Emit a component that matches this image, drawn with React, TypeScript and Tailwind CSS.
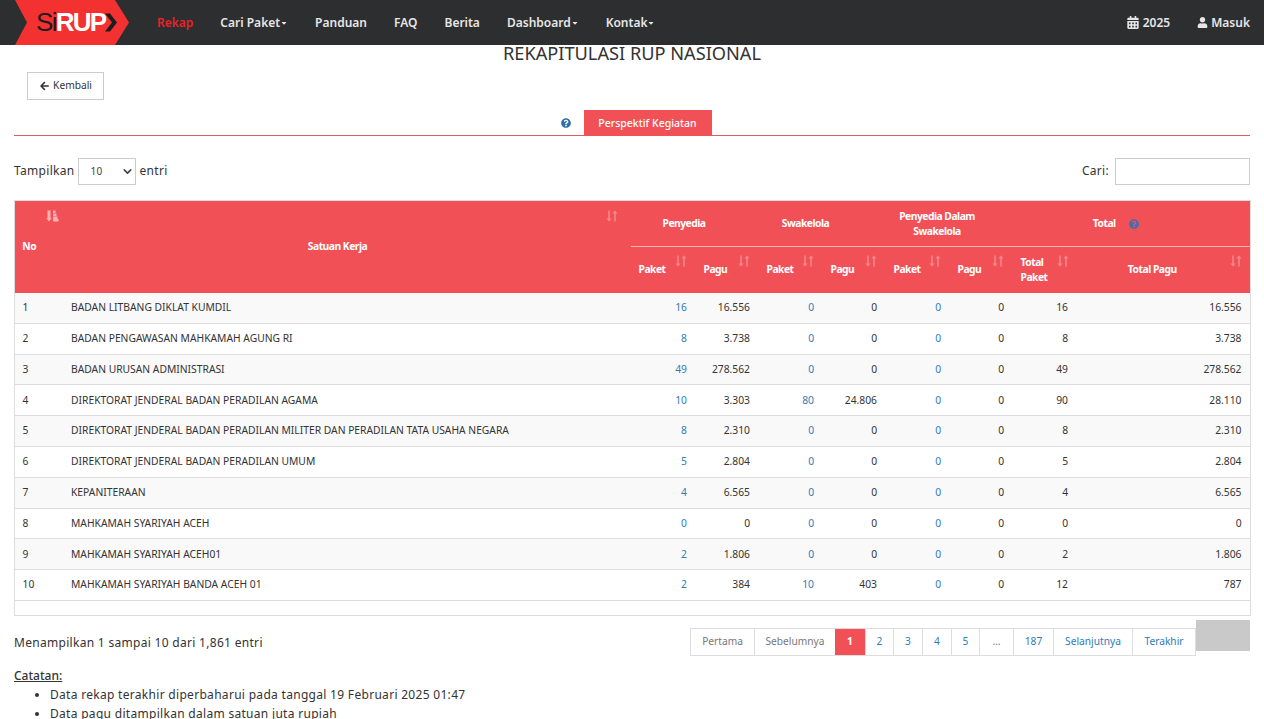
import { ChevronDown } from "lucide-react"
import { FaArrowLeft, FaCalendarAlt, FaUser, FaQuestionCircle, FaCaretDown } from "react-icons/fa"

const rows = [
  [1, "BADAN LITBANG DIKLAT KUMDIL", "16", "16.556", "0", "0", "0", "0", "16", "16.556"],
  [2, "BADAN PENGAWASAN MAHKAMAH AGUNG RI", "8", "3.738", "0", "0", "0", "0", "8", "3.738"],
  [3, "BADAN URUSAN ADMINISTRASI", "49", "278.562", "0", "0", "0", "0", "49", "278.562"],
  [4, "DIREKTORAT JENDERAL BADAN PERADILAN AGAMA", "10", "3.303", "80", "24.806", "0", "0", "90", "28.110"],
  [5, "DIREKTORAT JENDERAL BADAN PERADILAN MILITER DAN PERADILAN TATA USAHA NEGARA", "8", "2.310", "0", "0", "0", "0", "8", "2.310"],
  [6, "DIREKTORAT JENDERAL BADAN PERADILAN UMUM", "5", "2.804", "0", "0", "0", "0", "5", "2.804"],
  [7, "KEPANITERAAN", "4", "6.565", "0", "0", "0", "0", "4", "6.565"],
  [8, "MAHKAMAH SYARIYAH ACEH", "0", "0", "0", "0", "0", "0", "0", "0"],
  [9, "MAHKAMAH SYARIYAH ACEH01", "2", "1.806", "0", "0", "0", "0", "2", "1.806"],
  [10, "MAHKAMAH SYARIYAH BANDA ACEH 01", "2", "384", "10", "403", "0", "0", "12", "787"],
]

const navItems = [
  { label: "Rekap", active: true },
  { label: "Cari Paket", caret: true },
  { label: "Panduan" },
  { label: "FAQ" },
  { label: "Berita" },
  { label: "Dashboard", caret: true },
  { label: "Kontak", caret: true },
]

const pages = [
  { label: "Pertama", w: "w-[63px]", muted: true },
  { label: "Sebelumnya", w: "w-[81px]", muted: true },
  { label: "1", w: "w-[30px]", active: true },
  { label: "2", w: "w-[28px]" },
  { label: "3", w: "w-[29px]" },
  { label: "4", w: "w-[29px]" },
  { label: "5", w: "w-[28px]" },
  { label: "…", w: "w-[34px]", muted: true },
  { label: "187", w: "w-[40px]" },
  { label: "Selanjutnya", w: "w-[79px]" },
  { label: "Terakhir", w: "w-[63px]" },
]

function SortIcon({ className = "" }: { className?: string }) {
  return (
    <svg viewBox="0 0 12 12" className={`absolute h-3 w-3 text-white/30 ${className}`} fill="currentColor">
      <path d="M2.2 0.5h1.6v8H5.5L3 11.8 0.5 8.5h1.7z" />
      <path d="M8.2 11.5h1.6v-8h1.7L9 0.2 6.5 3.5h1.7z" />
    </svg>
  )
}

function ActiveSortIcon({ className = "" }: { className?: string }) {
  return (
    <svg viewBox="0 0 13 12" className={`absolute h-3 w-[13px] text-white/55 ${className}`} fill="currentColor">
      <path d="M1.5 0.5h3v7.5h1.2L3 11.5 0.3 8h1.2z" />
      <path d="M7 0.5h2.5v2.5H7zM7 3.5h3.5v2.5H7zM7 6.5h4.5v2.5H7zM7 9h5.5v2.5H7z" />
    </svg>
  )
}

const thBase = "relative p-0 font-bold tracking-[-0.5px] text-white"

export default function App() {
  return (
    <div className="h-screen overflow-hidden bg-white font-['Noto_Sans',sans-serif] text-[#333]">
      <nav className="flex h-[45px] items-center bg-[#2d2e30] pr-[14px]">
        <div className="relative ml-[15px] h-[45px] w-[114px] shrink-0">
          <svg viewBox="0 0 114 45" className="absolute inset-0 h-full w-full">
            <polygon points="0,0 100,0 114,22.5 100,45 0,45 12,22.5" fill="#f33131" />
          </svg>
          <div className="absolute left-[21px] top-[6px] flex items-center font-['Liberation_Sans',sans-serif] text-[26px] font-bold leading-[32px] tracking-[-1.7px]">
            <span className="font-normal text-[#1d1d1f]">Si</span>
            <span className="text-white">RUP</span>
          </div>
          <svg viewBox="0 0 12 18" className="absolute left-[90px] top-[13px] h-[19px] w-[12px]">
            <path d="M0 0h5l7 9-7 9H0l7-9z" fill="#1d1d1f" />
          </svg>
        </div>
        <ul className="ml-[28px] flex items-center gap-[27px] text-[12px] font-semibold">
          {navItems.map((item) => (
            <li key={item.label} className={`flex items-center ${item.active ? "text-[#e92327]" : "text-[#e6e6e6]"}`}>
              {item.label}
              {item.caret && <FaCaretDown className="h-2 w-[8px]" />}
            </li>
          ))}
        </ul>
        <div className="ml-auto flex items-center gap-[27px] text-[12px] font-semibold text-[#e6e6e6]">
          <span className="flex items-center gap-[3px]">
            <FaCalendarAlt className="h-[13px] w-[14px]" /> 2025
          </span>
          <span className="flex items-center gap-[3px]">
            <FaUser className="h-[11px] w-[11px]" /> Masuk
          </span>
        </div>
      </nav>

      <main className="px-[14px]">
        <h1 className="text-center text-[18.2px] leading-[16px] text-[#333]">REKAPITULASI RUP NASIONAL</h1>

        <button
          type="button"
          className="ml-[13px] mt-[11px] flex h-[28px] w-[77px] items-center justify-center gap-[3px] border border-[#ccc] bg-white pb-[1px] text-[10.2px]"
        >
          <FaArrowLeft className="h-[10px] w-[11px]" /> Kembali
        </button>

        <div className="mt-[10px] flex h-[26px] items-center justify-center border-b border-[#e25c5f] pl-[8px]">
          <FaQuestionCircle className="mr-[13px] h-[10px] w-[10px] text-[#2f6fa8]" />
          <div className="flex h-[26px] w-[128px] items-center justify-center bg-[#f15156] pt-[2px] text-[10.5px] font-medium text-white">
            Perspektif Kegiatan
          </div>
        </div>

        <div className="mt-[22px] flex h-[27px] items-center justify-between text-[12px] tracking-[0.3px]">
          <div className="flex items-center">
            <span className="mb-[2px]">Tampilkan</span>
            <div className="relative ml-[3px] mr-[4px] flex h-[27px] w-[58px] items-center border border-[#ccc] pl-[12px] text-[10px] text-[#444]">
              10
              <ChevronDown className="absolute right-[1px] h-[13px] w-[13px]" strokeWidth={3} />
            </div>
            <span className="mb-[2px]">entri</span>
          </div>
          <div className="flex items-center gap-[6px]">
            <span className="mb-[2px]">Cari:</span>
            <div className="h-[27px] w-[135px] border border-[#ccc]" />
          </div>
        </div>

        <table className="mt-[15px] w-[1236px] table-fixed border-collapse border border-[#ddd] text-[10.3px]">
          <colgroup>
            <col className="w-[49px]" />
            <col className="w-[567px]" />
            <col className="w-[65px]" />
            <col className="w-[63px]" />
            <col className="w-[64px]" />
            <col className="w-[63px]" />
            <col className="w-[64px]" />
            <col className="w-[63px]" />
            <col className="w-[64px]" />
            <col className="w-[174px]" />
          </colgroup>
          <thead className="bg-[#f15156] leading-[15px]">
            <tr className="h-[46px]">
              <th rowSpan={2} className={`${thBase} pr-[20px] text-center`}>
                No
                <ActiveSortIcon className="left-[31px] top-[9px]" />
              </th>
              <th rowSpan={2} className={`${thBase} pr-[19px] text-center`}>
                Satuan Kerja
                <SortIcon className="right-[13px] top-[9px]" />
              </th>
              <th colSpan={2} className={`${thBase} border-b border-[#f9b5b8] pr-[21px] text-center`}>Penyedia</th>
              <th colSpan={2} className={`${thBase} border-b border-[#f9b5b8] pr-[33px] text-center`}>Swakelola</th>
              <th colSpan={2} className={`${thBase} border-b border-[#f9b5b8] pr-[24px] text-center`}>
                Penyedia Dalam
                <br />
                Swakelola
              </th>
              <th colSpan={2} className={`${thBase} border-b border-[#f9b5b8] pr-[54px] text-center`}>
                Total
                <FaQuestionCircle className="absolute left-[116px] top-[18px] h-[10px] w-[10px] text-[#3f6fb0]" />
              </th>
            </tr>
            <tr className="h-[46px]">
              {["Paket", "Pagu", "Paket", "Pagu", "Paket", "Pagu"].map((label, i) => (
                <th key={i} className={`${thBase} pl-[8px] text-left`}>
                  {label}
                  <SortIcon className="right-[9px] top-[8px]" />
                </th>
              ))}
              <th className={`${thBase} pl-[8px] text-left`}>
                Total
                <br />
                Paket
                <SortIcon className="right-[8px] top-[8px]" />
              </th>
              <th className={`${thBase} pr-[22px] text-center`}>
                Total Pagu
                <SortIcon className="right-[8px] top-[8px]" />
              </th>
            </tr>
          </thead>
          <tbody>
            {rows.map((row, i) => (
              <tr key={i} className={`h-[30.8px] border-b border-[#ddd] ${i % 2 === 0 ? "bg-[#f9f9f9]" : "bg-white"}`}>
                {row.map((cell, j) => {
                  const isLink = j === 2 || j === 4 || j === 6
                  return (
                    <td
                      key={j}
                      className={`p-0 ${j < 2 ? "pl-[7.5px] text-left" : "pr-[8.5px] text-right"} ${isLink ? "text-[#337ab7]" : "text-[#333]"}`}
                    >
                      {cell}
                    </td>
                  )
                })}
              </tr>
            ))}
            <tr className="h-[15px]">
              <td colSpan={10} />
            </tr>
          </tbody>
        </table>

        <div className="mt-[4px] flex items-start justify-between text-[12px] tracking-[0.3px]">
          <div className="mt-[14px] leading-[17px]">Menampilkan 1 sampai 10 dari 1,861 entri</div>
          <div className="flex items-start">
            <ul className="mt-[8px] flex h-[28px] border border-[#ddd] text-[10.2px] tracking-normal">
              {pages.map((p) => (
                <li
                  key={p.label}
                  className={`flex items-center justify-center border-l border-[#ddd] first:border-l-0 ${p.w} ${
                    p.active ? "border-l-0 bg-[#f15156] font-bold text-white" : p.muted ? "text-[#777]" : "text-[#337ab7]"
                  }`}
                >
                  {p.label}
                </li>
              ))}
            </ul>
            <div className="h-[31px] w-[54px] bg-[#c9c9c9]" />
          </div>
        </div>

        <div className="mt-[10px] text-[12px] leading-[19px] tracking-[0.3px]">
          <p className="font-medium tracking-normal underline">Catatan:</p>
          <ul className="list-disc pl-[36px]">
            <li>Data rekap terakhir diperbaharui pada tanggal 19 Februari 2025 01:47</li>
            <li>Data pagu ditampilkan dalam satuan juta rupiah</li>
          </ul>
        </div>
      </main>
    </div>
  )
}
